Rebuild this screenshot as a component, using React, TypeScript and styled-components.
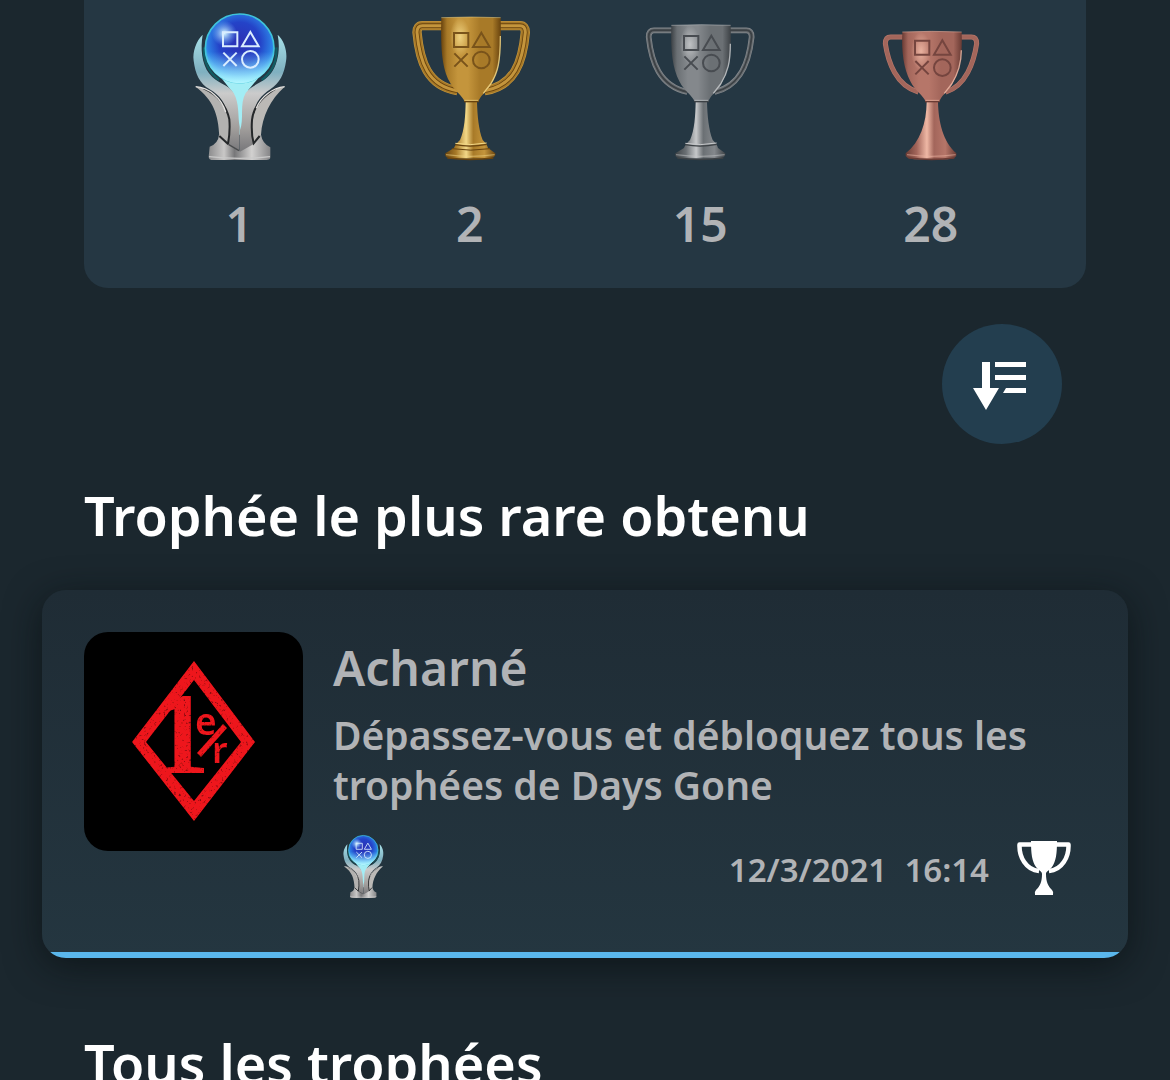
import React, { useId } from 'react';
import styled, { createGlobalStyle } from 'styled-components';

const GlobalStyle = createGlobalStyle`
  *, *::before, *::after { box-sizing: border-box; }
  body {
    margin: 0;
    background: #1b272e;
    font-family: 'Noto Sans', 'Open Sans', sans-serif;
    font-weight: 600;
  }
`;

const Screen = styled.main`
  height: 100vh;
  overflow: hidden;
  padding: 0 42px;
  background: #1b272e;
`;

const Summary = styled.ul`
  display: grid;
  grid-template-columns: repeat(4, 1fr);
  margin: 0 42px;
  padding: 0 40px 32px;
  list-style: none;
  background: #253743;
  border-radius: 0 0 24px 24px;
`;

const Tally = styled.li`
  display: flex;
  flex-direction: column;
  align-items: center;
  gap: 12px;
`;

const Count = styled.span`
  font-size: 48px;
  line-height: 64px;
  color: #b1b3b6;
`;

const Toolbar = styled.div`
  display: flex;
  justify-content: flex-end;
  padding: 36px 66px;
`;

const SortButton = styled.button`
  display: grid;
  place-items: center;
  width: 120px;
  height: 120px;
  padding: 0;
  border: 0;
  border-radius: 50%;
  background: #233e4f;
  color: #fff;
  cursor: pointer;
`;

const Heading = styled.h2`
  margin: 0 42px;
  font-size: 54px;
  line-height: 70px;
  font-weight: 600;
  color: #fff;
`;

const Card = styled.article`
  display: flex;
  gap: 30px;
  margin: 40px 0 70px;
  padding: 42px 42px 48px;
  overflow: hidden;
  border-radius: 24px;
  background:
    linear-gradient(#5ab7ec, #5ab7ec) bottom / 100% 6px no-repeat,
    linear-gradient(#1f2c35, #243640);
  box-shadow: 0 8px 36px rgba(8, 14, 16, 0.65);
`;

const Artwork = styled.svg`
  flex: none;
  width: 219px;
  height: 219px;
  border-radius: 24px;
  background: #000;
`;

const Details = styled.div`
  flex: 1;
  min-width: 0;
  color: #b1b3b6;
`;

const Title = styled.h3`
  margin: 0 0 6px;
  font-size: 48px;
  line-height: 72px;
  font-weight: 600;
`;

const Description = styled.p`
  margin: 0;
  font-size: 39px;
  line-height: 50px;
`;

const Meta = styled.div`
  display: flex;
  align-items: center;
  gap: 28px;
  height: 84px;
  margin-top: 16px;
  padding-right: 15px;
`;

const Earned = styled.time`
  margin-left: auto;
  padding-top: 4px;
  font-size: 33px;
  line-height: 48px;
  white-space: pre;
`;

type Metal = 'gold' | 'silver' | 'bronze';

const metals: Record<Metal, { light: string; mid: string; base: string; dark: string; ink: string }> = {
  gold: { light: '#f3d887', mid: '#c4953c', base: '#a87a28', dark: '#68430e', ink: '#79531a' },
  silver: { light: '#c6c8ca', mid: '#84888c', base: '#6b7074', dark: '#3c4145', ink: '#484c51' },
  bronze: { light: '#efb8a5', mid: '#b67669', base: '#a3665b', dark: '#6a3b34', ink: '#75453f' },
};

function Shapes({ y, color, width }: { y: number; color: string; width: number }) {
  return (
    <g transform={`translate(0 ${y})`} fill="none" stroke={color} strokeWidth={width}>
      <path d="M162 0h43v42h-43zM244 -1L269 42H219zM163 61L203 101M203 61L163 101" />
      <circle cx="244" cy="81" r="25" />
    </g>
  );
}

const cups: Record<Metal, { top: number; left: number; right: number; width: number }> = {
  gold: { top: 53, left: 47, right: 379, width: 28 },
  silver: { top: 76, left: 52, right: 368, width: 17 },
  bronze: { top: 96, left: 69, right: 350, width: 15 },
};

function Cup({ metal }: { metal: Metal }) {
  const id = useId().replace(/[^a-zA-Z0-9]/g, '');
  const c = metals[metal];
  const { top, left, right, width } = cups[metal];
  const h = top + (metal === 'gold' ? 24 : 15);
  const l = left + 4;
  const r = right - 3;
  const end = metal === 'gold' ? 272 : 276;
  const handles = `M130 ${h}H${l + 16}Q${l} ${h} ${l} ${h + 20}C${l + 8} 185 ${l + 32} 258 172 ${end}
    M296 ${h}H${r - 16}Q${r} ${h} ${r} ${h + 20}C${r - 8} 185 ${r - 32} 258 254 ${end}`;
  return (
    <svg width="140" height="180" viewBox="0 0 420 540" role="img" aria-label={metal}>
      <defs>
        <linearGradient id={`${id}b`}>
          <stop offset="0" stopColor={c.dark} />
          <stop offset=".1" stopColor={c.base} />
          <stop offset=".28" stopColor={c.mid} />
          <stop offset=".45" stopColor={c.mid} />
          <stop offset=".65" stopColor={c.base} />
          <stop offset=".86" stopColor={c.base} />
          <stop offset="1" stopColor={c.dark} />
        </linearGradient>
        <linearGradient id={`${id}s`}>
          <stop offset="0" stopColor={c.dark} />
          <stop offset=".22" stopColor={c.base} />
          <stop offset=".42" stopColor={c.light} />
          <stop offset=".56" stopColor={c.base} />
          <stop offset=".78" stopColor={c.mid} />
          <stop offset="1" stopColor={c.dark} />
        </linearGradient>
        <radialGradient id={`${id}g`}>
          <stop offset="0" stopColor={c.light} stopOpacity=".9" />
          <stop offset="1" stopColor={c.light} stopOpacity="0" />
        </radialGradient>
      </defs>
      <g fill="none" strokeLinejoin="round">
        <path d={handles} stroke={c.mid} strokeWidth={width} />
        <path d={handles} stroke={c.base} strokeWidth={width - 4} />
        {metal === 'gold' && <path d={handles} stroke={c.dark} strokeWidth="14" />}
        {metal === 'gold' && <path d={handles} stroke={c.mid} strokeWidth="9" />}
        {metal === 'silver' && <path d={handles} stroke={c.dark} strokeWidth="6" />}
      </g>
      <path
        d={`M124 ${top}Q212 ${top - 4} 302 ${top}C305 165 296 215 274 252C257 280 240 286 235 306H194C188 286 164 276 148 244C128 205 121 155 124 ${top}Z`}
        fill={`url(#${id}b)`}
      />
      <ellipse cx="180" cy={top + 58} rx="30" ry="58" fill={`url(#${id}g)`} />
      <path d={`M301 ${top + 55}C301 185 294 217 272 252L250 280`} fill="none" stroke={c.light} strokeWidth="4" opacity=".85" />
      <path d={`M124 ${top}Q212 ${top - 4} 302 ${top}`} fill="none" stroke={c.light} strokeWidth="3" opacity=".5" />
      <path
        d={
          metal === 'bronze'
            ? 'M197 306H231C232 365 246 425 286 460Q290 476 260 478H160Q130 476 134 460C178 425 196 370 197 306Z'
            : 'M197 306H231C232 346 236 390 248 420Q262 434 264 444L286 460Q290 474 262 476H158Q130 474 136 460L162 444Q165 434 180 420C194 390 196 346 197 306Z'
        }
        fill={`url(#${id}s)`}
      />
      <path d="M192 305H236" stroke={c.dark} strokeWidth="4" />
      <path d="M194 301H234" stroke={c.light} strokeWidth="2" />
      {metal !== 'bronze' && <path d="M166 434Q212 443 260 433" fill="none" stroke={c.dark} strokeWidth="4" />}
      {metal === 'gold' && <path d="M156 446Q212 455 270 446" fill="none" stroke={c.dark} strokeWidth="3" />}
      {metal !== 'bronze' && <path d="M166 430Q212 438 260 429" fill="none" stroke={c.light} strokeWidth="3" />}
      <path d="M138 464Q212 474 284 464" fill="none" stroke={c.light} strokeWidth="4" opacity=".5" />
      <path d="M142 474Q212 482 280 474" fill="none" stroke={c.dark} strokeWidth="5" />
      <Shapes y={metal === 'gold' ? 99 : metal === 'silver' ? 108 : 122} color={c.ink} width={6} />
    </svg>
  );
}

function Platinum({ width, height }: { width: number; height: number }) {
  const id = useId().replace(/[^a-zA-Z0-9]/g, '');
  return (
    <svg width={width} height={height} viewBox="0 0 420 540" role="img" aria-label="platine">
      <defs>
        <radialGradient id={`${id}o`} cx=".5" cy=".42" r=".6">
          <stop offset="0" stopColor="#2c30b4" />
          <stop offset=".5" stopColor="#2443c8" />
          <stop offset=".78" stopColor="#2c7ee4" />
          <stop offset="1" stopColor="#54d8f4" />
        </radialGradient>
        <linearGradient id={`${id}w`} x1="0" y1="0" x2="0" y2="1">
          <stop offset=".55" stopColor="#8ce8ff" stopOpacity="0" />
          <stop offset="1" stopColor="#b4f5ff" />
        </linearGradient>
        <linearGradient id={`${id}h`} x1="0" y1="0" x2="0" y2="1">
          <stop offset="0" stopColor="#a7e0e8" />
          <stop offset=".32" stopColor="#7fb0c0" />
          <stop offset=".5" stopColor="#cbcbcb" />
          <stop offset=".8" stopColor="#a19e9c" />
          <stop offset="1" stopColor="#77777a" />
        </linearGradient>
        <linearGradient id={`${id}b`}>
          <stop offset="0" stopColor="#8c8c8d" />
          <stop offset=".25" stopColor="#c9c8c7" />
          <stop offset=".42" stopColor="#777779" />
          <stop offset=".7" stopColor="#d2d1d0" />
          <stop offset="1" stopColor="#858587" />
        </linearGradient>
        <radialGradient id={`${id}s`}>
          <stop offset="0" stopColor="#d8faff" />
          <stop offset="1" stopColor="#75bcff" stopOpacity="0" />
        </radialGradient>
      </defs>
      <path d="M142 215H284L238 270L219 404H205L192 278Z" fill="#a3edf5" />
      <path d="M122 440Q148 430 150 404L212 452L276 404Q280 430 304 442V472Q304 480 292 480H132Q119 480 119 470Z" fill={`url(#${id}b)`} />
      <path d="M120 470Q212 480 303 470" fill="none" stroke="#c9c9c9" strokeWidth="4" />
      <path d="M101 104C82 122 70 155 74 182C79 222 91 249 122 268C155 288 170 310 174 345V430L212 455V380C206 350 212 310 194 279C178 252 143 252 120 220C98 190 94 145 101 104Z" fill={`url(#${id}h)`} />
      <path d="M326 104C346 122 356 155 351 184C346 222 332 249 304 268C274 288 257 310 254 345L258 430L213 455V390C226 360 211 310 230 279C248 252 282 252 306 220C328 190 334 145 326 104Z" fill={`url(#${id}h)`} />
      <path d="M80 260C120 262 160 295 174 336Q186 370 175 433L151 410C148 340 132 300 80 260Z" fill="#b3b2b0" />
      <path d="M347 260C310 264 273 290 258 330Q247 360 253 432L276 404C279 350 304 298 347 260Z" fill="#bbb9b6" />
      <path d="M104 265C150 286 172 316 181 358Q184 395 177 432M320 266C276 292 253 322 249 360Q246 402 254 430L272 408M151 408L178 433" fill="none" stroke="#25282a" strokeWidth="6" />
      <path d="M178 433L210 452" fill="none" stroke="#4a4c4e" strokeWidth="4" />
      <path d="M80 260C120 262 158 295 170 336M347 260C310 264 275 291 262 325" fill="none" stroke="#e3e1df" strokeWidth="4" />
      <path d="M105 142Q102 205 150 240M322 142Q326 205 278 240" fill="none" stroke="#125b62" strokeWidth="7" />
      <circle cx="212" cy="145" r="103" fill={`url(#${id}o)`} stroke="#3fc3da" strokeWidth="5" />
      <circle cx="212" cy="145" r="105" fill={`url(#${id}w)`} />
      <circle cx="166" cy="100" r="38" fill={`url(#${id}s)`} />
      <Shapes y={97} color="#d9edff" width={6} />
    </svg>
  );
}

function SortIcon() {
  return (
    <svg width="120" height="120" viewBox="0 0 120 120" fill="currentColor" aria-hidden="true">
      <path d="M40 38h8v26h9L44 86 31 64h9zM53 38h31v5H53zM53 51h31v5H53zM64 64h20v5H61z" />
    </svg>
  );
}

function TrophyIcon() {
  return (
    <svg width="54" height="54" viewBox="0 0 54 54" aria-hidden="true">
      <path d="M15 3.5H2.5C2 16 9 29 22 30M39 3.5h12.500C52 16 45 29 32 30" fill="none" stroke="#fff" strokeWidth="4.500" strokeLinejoin="round" />
      <path d="M14 0h26c0 13-1 20-5 26-3 4-6 4-6 7 0 8 2 12 6 16q2 2 1 5H18q-1-3 1-5c4-4 6-8 6-16 0-3-3-3-6-7-4-6-5-13-5-26z" fill="#fff" />
    </svg>
  );
}

function FirstEmblem() {
  return (
    <Artwork viewBox="0 0 219 219" role="img" aria-label="Acharné">
      <defs>
        <filter id="worn" x="0" y="0" width="1" height="1">
          <feTurbulence type="fractalNoise" baseFrequency=".4" numOctaves="3" seed="8" />
          <feColorMatrix values="0 0 0 0 0  0 0 0 0 0  0 0 0 0 0  0 2 0 0 -1.200" result="specks" />
          <feComposite in="SourceGraphic" in2="specks" operator="out" />
        </filter>
      </defs>
      <g filter="url(#worn)" fill="#ee151b">
        <path fillRule="evenodd" d="M110 29L171 110L110 189L48 110ZM110 48L62 110L110 169L157 110Z" />
        <text x="68" y="141" fontFamily="'Liberation Serif', serif" fontWeight="700" fontSize="116">1</text>
        <text x="111" y="103" fontFamily="'Noto Sans', sans-serif" fontWeight="600" fontSize="37">e</text>
        <text x="128" y="131" fontFamily="'Noto Sans', sans-serif" fontWeight="600" fontSize="36">r</text>
        <path d="M139 92L143 96L117 125L113 121Z" />
      </g>
    </Artwork>
  );
}

export default function App() {
  return (
    <>
      <GlobalStyle />
      <Screen>
        <Summary>
          <Tally><Platinum width={140} height={180} /><Count>1</Count></Tally>
          <Tally><Cup metal="gold" /><Count>2</Count></Tally>
          <Tally><Cup metal="silver" /><Count>15</Count></Tally>
          <Tally><Cup metal="bronze" /><Count>28</Count></Tally>
        </Summary>
        <Toolbar>
          <SortButton type="button" aria-label="Trier"><SortIcon /></SortButton>
        </Toolbar>
        <Heading>Trophée le plus rare obtenu</Heading>
        <Card>
          <FirstEmblem />
          <Details>
            <Title>Acharné</Title>
            <Description>Dépassez-vous et débloquez tous les trophées de Days Gone</Description>
            <Meta>
              <Platinum width={60} height={80} />
              <Earned dateTime="2021-03-12T16:14">{'12/3/2021  16:14'}</Earned>
              <TrophyIcon />
            </Meta>
          </Details>
        </Card>
        <Heading>Tous les trophées</Heading>
      </Screen>
    </>
  );
}
